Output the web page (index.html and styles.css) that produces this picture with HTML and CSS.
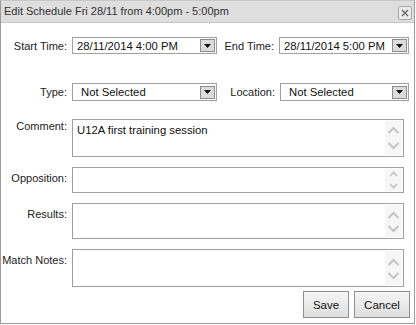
FILE: index.html
```html
<!DOCTYPE html>
<html>
<head>
<meta charset="utf-8">
<link rel="stylesheet" href="styles.css">
</head>
<body>
<div class="dialog">
  <div class="titlebar">
    <span class="title">Edit Schedule Fri 28/11 from 4:00pm - 5:00pm</span>
    <span class="close">
      <svg width="8" height="8" viewBox="0 0 8 8"><path d="M1 1L7 7M7 1L1 7" stroke="#666" stroke-width="1.4"/></svg>
    </span>
  </div>
  <div class="content">
    <div class="row row1">
      <label class="lbl">Start Time:</label>
      <div class="select w145"><span class="val p4">28/11/2014 4:00 PM</span><span class="drop"><svg width="7" height="4" viewBox="0 0 7 4"><path d="M0 0H7L3.5 4Z" fill="#111"/></svg></span></div>
      <label class="lbl2 w62">End Time:</label>
      <div class="select w130"><span class="val p4">28/11/2014 5:00 PM</span><span class="drop"><svg width="7" height="4" viewBox="0 0 7 4"><path d="M0 0H7L3.5 4Z" fill="#111"/></svg></span></div>
    </div>
    <div class="row row2">
      <label class="lbl">Type:</label>
      <div class="select w145 h18"><span class="val p8">Not Selected</span><span class="drop"><svg width="7" height="4" viewBox="0 0 7 4"><path d="M0 0H7L3.5 4Z" fill="#111"/></svg></span></div>
      <label class="lbl2 w63">Location:</label>
      <div class="select w129 h18"><span class="val p8">Not Selected</span><span class="drop"><svg width="7" height="4" viewBox="0 0 7 4"><path d="M0 0H7L3.5 4Z" fill="#111"/></svg></span></div>
    </div>
    <div class="fields">
      <label class="lbl top4">Comment:</label>
      <div class="area h38"><span class="text">U12A first training session</span>
        <span class="scroll"><svg width="13" height="30" viewBox="0 0 13 30"><path d="M1.5 10L6.5 5L11.5 10M1.5 20L6.5 25L11.5 20" fill="none" stroke="#c4c4c4" stroke-width="2"/></svg></span>
      </div>
      <label class="lbl top7">Opposition:</label>
      <div class="area h26">
        <span class="scroll"><svg width="13" height="24" viewBox="0 0 13 24"><path d="M3 8L6.5 4.5L10 8M3 16L6.5 19.5L10 16" fill="none" stroke="#c4c4c4" stroke-width="1.6"/></svg></span>
      </div>
      <label class="lbl top5">Results:</label>
      <div class="area h36">
        <span class="scroll"><svg width="13" height="34" viewBox="0 0 13 34"><path d="M1.5 14L6.5 9L11.5 14M1.5 22L6.5 27L11.5 22" fill="none" stroke="#c4c4c4" stroke-width="2"/></svg></span>
      </div>
      <label class="lbl top5">Match Notes:</label>
      <div class="area h38">
        <span class="scroll"><svg width="13" height="36" viewBox="0 0 13 36"><path d="M1.5 15L6.5 10L11.5 15M1.5 23L6.5 28L11.5 23" fill="none" stroke="#c4c4c4" stroke-width="2"/></svg></span>
      </div>
    </div>
    <div class="buttons">
      <button class="btn save">Save</button>
      <button class="btn cancel">Cancel</button>
    </div>
  </div>
</div>
</body>
</html>
```
FILE: styles.css
```css
html, body {
  margin: 0;
  padding: 0;
  background: #ffffff;
}
body {
  font-family: "Liberation Sans", Arial, sans-serif;
  font-size: 11px;
  color: #111;
}
.dialog {
  width: 413px;
  height: 322px;
  border: 1px solid #9a9a9a;
  border-top-color: #c8c8c8;
  background: #fff;
}
.titlebar {
  height: 21px;
  background: #dedede;
  border-bottom: 1px solid #c4c4c4;
  display: flex;
  align-items: center;
  justify-content: space-between;
  padding: 0 2px 0 3px;
}
.title {
  color: #333;
  font-size: 11px;
  line-height: 21px;
}
.close {
  width: 12px;
  height: 12px;
  border: 1px solid #a8a8a8;
  border-radius: 2px;
  background: #ececec;
  display: flex;
  align-items: center;
  justify-content: center;
  margin-top: 2px;
}
.content {
  padding-top: 14px;
}
.row {
  display: flex;
  align-items: center;
}
.row2 {
  margin-top: 29px;
}
.lbl {
  width: 66px;
  text-align: right;
  padding-right: 5px;
  flex: none;
  color: #222;
  white-space: nowrap;
  font-size: 11px;
}
.lbl2 {
  text-align: right;
  padding-right: 5px;
  flex: none;
  color: #222;
  box-sizing: border-box;
  white-space: nowrap;
  font-size: 11px;
}
.w62 { width: 62px; }
.w63 { width: 63px; }
.select {
  box-sizing: border-box;
  height: 17px;
  border: 1px solid #a0a0a0;
  display: flex;
  align-items: center;
  justify-content: space-between;
  padding-right: 1px;
  flex: none;
}
.h18 { height: 18px; }
.w145 { width: 145px; }
.w130 { width: 130px; }
.w129 { width: 129px; }
.val {
  white-space: nowrap;
  color: #111;
  font-size: 11.3px;
}
.p4 { padding-left: 4px; }
.p8 { padding-left: 8px; }
.drop {
  box-sizing: border-box;
  width: 15px;
  height: 13px;
  border: 1px solid #8c8c8c;
  background: #dcdcdc;
  display: flex;
  align-items: center;
  justify-content: center;
}
.fields {
  display: grid;
  grid-template-columns: 66px 332px;
  column-gap: 5px;
  row-gap: 10px;
  margin-top: 18px;
}
.fields .lbl {
  width: auto;
  padding-right: 0;
}
.top4 { padding-top: 1px; }
.top7 { padding-top: 5px; }
.top5 { padding-top: 5px; }
.area {
  box-sizing: border-box;
  border: 1px solid #a0a0a0;
  display: flex;
  align-items: stretch;
}
.h38 { height: 38px; }
.h26 { height: 26px; }
.h36 { height: 36px; }
.text {
  padding: 4px 0 0 4px;
  color: #111;
  font-size: 11.3px;
}
.scroll {
  width: 17px;
  margin: 1px 1px 1px auto;
  background: #f6f6f6;
  display: flex;
  align-items: center;
  justify-content: center;
}
.buttons {
  display: flex;
  justify-content: flex-end;
  gap: 5px;
  margin-top: 4px;
  padding-right: 4px;
}
.btn {
  box-sizing: border-box;
  height: 27px;
  border: 1px solid #8f8f8f;
  background: linear-gradient(#f6f6f6, #dedede);
  font-family: "Liberation Sans", Arial, sans-serif;
  font-size: 11.5px;
  color: #111;
  padding: 0;
}
.save { width: 46px; }
.cancel { width: 56px; }
```
